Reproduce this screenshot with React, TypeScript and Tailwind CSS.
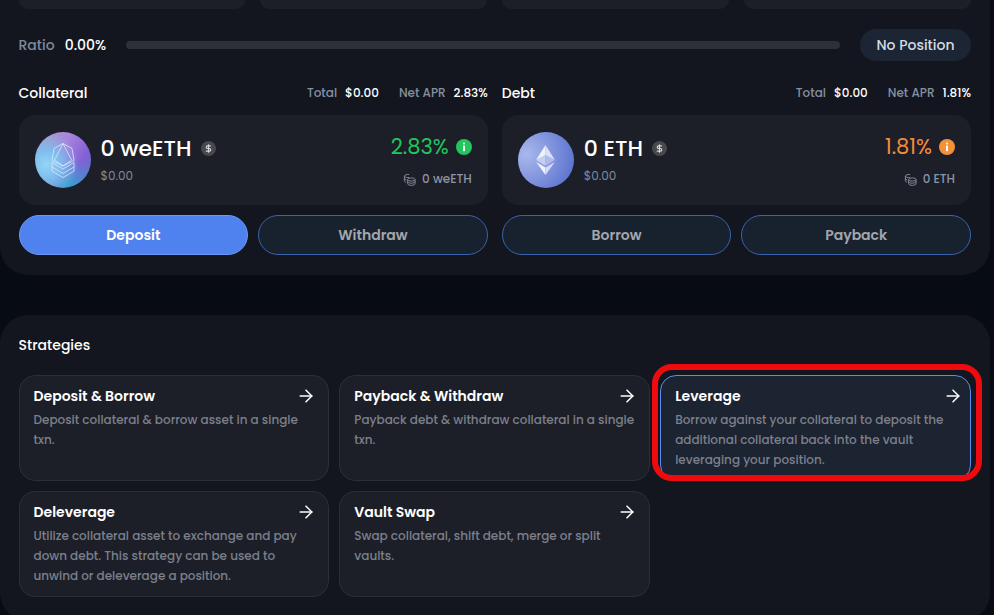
import type { ReactNode } from "react";
import { ArrowRight, DollarSign } from "lucide-react";

const font = "font-['Poppins','Inter','Noto_Sans',sans-serif]";

function CoinsIcon() {
  return (
    <svg viewBox="0 0 14 14" className="h-[13px] w-[13px] text-[#8b8f98]" fill="none" stroke="currentColor" strokeWidth="1">
      <path d="M6.5 1.6C3.8 1.4 1.5 2.2 1.5 3.4v5c0 .7.6 1.2 1.7 1.5" />
      <path d="M1.5 3.6c.6 1 2.8 1.5 5 1.3M1.5 6.2c.4.6 1.1 1 2 1.2" />
      <ellipse cx="9" cy="7" rx="4" ry="1.7" />
      <path d="M5 7v4.6c0 .9 1.8 1.7 4 1.7s4-.8 4-1.7V7M5 9.3c0 .9 1.8 1.7 4 1.7s4-.8 4-1.7" />
    </svg>
  );
}

function InfoBadge({ className }: { className: string }) {
  return (
    <svg viewBox="0 0 16 16" className={`h-4 w-4 ${className}`}>
      <circle cx="8" cy="8" r="8" fill="currentColor" />
      <rect x="7" y="3.6" width="2" height="2" rx="1" fill="#fff" />
      <rect x="7" y="6.6" width="2" height="5.6" rx="0.6" fill="#fff" />
    </svg>
  );
}

function WeethLogo() {
  return (
    <div className="flex h-14 w-14 shrink-0 items-center justify-center rounded-full bg-[radial-gradient(circle_at_20%_58%,#92d6f7_0%,#7fbcec_26%,transparent_58%),radial-gradient(circle_at_58%_100%,#2fa6cf_0%,transparent_48%),linear-gradient(120deg,#a8a8c0_0%,#a884dc_42%,#8560d6_72%,#4a7cc0_100%)]">
      <svg viewBox="0 0 24 35" className="h-[35px] w-6" fill="none" stroke="#dfe6fb" strokeWidth="0.8" strokeLinejoin="round">
        <path d="M12 .5 21 5.5 23 17.5 12 23 1 17.5 3 5.5Z" />
        <path d="M12 .5 3.5 17 12 23 20.5 17Z" />
        <path d="M1 19.5 12 26 23 19.5 23 28 12 34.5 1 28Z" />
        <path d="M1 24 12 30.5 23 24" />
      </svg>
    </div>
  );
}

function EthLogo() {
  return (
    <div className="flex h-14 w-14 shrink-0 items-center justify-center rounded-full bg-[radial-gradient(circle_at_15%_40%,#a9b8ec_0%,#8698e0_40%,#4f68c8_100%)]">
      <svg viewBox="0 0 20 32" className="h-[30px] w-[19px]">
        <path d="M10 0 0 16 10 11Z" fill="#f0f3fd" />
        <path d="M10 0 20 16 10 11Z" fill="#dbe2f8" />
        <path d="M10 11 0 16 10 22Z" fill="#c5cff2" />
        <path d="M10 11 20 16 10 22Z" fill="#aebbea" />
        <path d="M0 18 10 32V24Z" fill="#f0f3fd" />
        <path d="M20 18 10 32V24Z" fill="#d5dcf6" />
      </svg>
    </div>
  );
}

type PositionProps = {
  title: string;
  apr: string;
  amount: string;
  aprColor: string;
  logo: ReactNode;
  buttons: { label: string; primary?: boolean }[];
};

function PositionColumn({ title, apr, amount, aprColor, logo, buttons }: PositionProps) {
  return (
    <div>
      <div className="flex h-[30px] items-center justify-between">
        <span className="text-sm font-medium text-white">{title}</span>
        <div className="flex items-center gap-2 text-xs font-medium">
          <span className="text-[#8590a0]">Total</span>
          <span className="text-white">$0.00</span>
          <span className="ml-3 text-[#8590a0]">Net APR</span>
          <span className="text-white">{apr}</span>
        </div>
      </div>
      <div className="mt-[7px] flex h-[90px] items-center justify-between rounded-2xl bg-[#1c1f28] px-4">
        <div className="flex items-center gap-[10px]">
          {logo}
          <div className="pb-[3px]">
            <div className="flex items-center gap-[9px]">
              <span className="text-[22px] leading-[30px] font-medium text-white">0 {amount}</span>
              <span className="flex h-[15px] w-[15px] items-center justify-center rounded-full bg-[#48494e]">
                <DollarSign className="h-[9px] w-[9px] text-[#d8d8da]" strokeWidth={3} />
              </span>
            </div>
            <div className="mt-1 text-xs text-[#7f8a9b]">$0.00</div>
          </div>
        </div>
        <div className="flex flex-col items-end gap-3 pt-[2px]">
          <div className={`flex items-center gap-[7px] text-[21px] leading-6 ${aprColor === "green" ? "text-[#22c55e]" : "text-[#f58a3c]"}`}>
            {apr}
            <InfoBadge className={aprColor === "green" ? "text-[#22c55e]" : "text-[#f59238]"} />
          </div>
          <div className="flex items-center gap-[6px] text-xs font-medium text-[#8b95a5]">
            <CoinsIcon />0 {amount}
          </div>
        </div>
      </div>
      <div className="mt-[10px] grid grid-cols-2 gap-[10px]">
        {buttons.map((b) => (
          <button
            key={b.label}
            className={
              b.primary
                ? "h-10 rounded-[20px] border border-[#6b97f5] bg-[#4f82ee] text-sm font-semibold text-white"
                : "h-10 rounded-[20px] border border-[#3a62ad] bg-[#18222f] text-sm font-semibold text-[#a3a6ac]"
            }
          >
            {b.label}
          </button>
        ))}
      </div>
    </div>
  );
}

const strategies = [
  { title: "Deposit & Borrow", text: "Deposit collateral & borrow asset in a single txn." },
  { title: "Payback & Withdraw", text: "Payback debt & withdraw collateral in a single txn." },
  { title: "Leverage", text: "Borrow against your collateral to deposit the additional collateral back into the vault leveraging your position.", active: true },
  { title: "Deleverage", text: "Utilize collateral asset to exchange and pay down debt. This strategy can be used to unwind or deleverage a position." },
  { title: "Vault Swap", text: "Swap collateral, shift debt, merge or split vaults." },
];

export default function App() {
  return (
    <div className={`${font} h-[615px] w-[994px] overflow-hidden bg-[#070b14] pr-1`}>
      <section className="rounded-b-[28px] bg-[#13161e] pr-[19px] pb-5 pl-[18.5px]">
        <div className="grid grid-cols-4 gap-[15px]">
          {[0, 1, 2, 3].map((i) => (
            <div key={i} className="h-[9px] rounded-b-2xl bg-[#1c1f28]" />
          ))}
        </div>
        <div className="mt-5 flex h-8 items-center">
          <span className="text-sm font-medium text-[#7f8a9b]">Ratio</span>
          <span className="ml-[10px] text-sm font-medium text-white">0.00%</span>
          <div className="ml-5 h-2 flex-1 rounded-full bg-[#2d3039]" />
          <span className="ml-5 flex h-8 w-[111px] items-center justify-center rounded-full bg-[#1b2533] text-sm font-medium text-[#d5dae2]">
            No Position
          </span>
        </div>
        <div className="mt-[17px] grid grid-cols-2 gap-[14px]">
          <PositionColumn
            title="Collateral"
            apr="2.83%"
            amount="weETH"
            aprColor="green"
            logo={<WeethLogo />}
            buttons={[{ label: "Deposit", primary: true }, { label: "Withdraw" }]}
          />
          <PositionColumn
            title="Debt"
            apr="1.81%"
            amount="ETH"
            aprColor="orange"
            logo={<EthLogo />}
            buttons={[{ label: "Borrow" }, { label: "Payback" }]}
          />
        </div>
      </section>
      <section className="relative mt-10 h-[306px] rounded-[28px] bg-[#13161e] pt-[20px] pr-[19px] pl-[18.5px]">
        <h2 className="text-sm leading-5 font-medium text-white">Strategies</h2>
        <div className="mt-5 grid grid-cols-3 gap-[10px]">
          {strategies.map((s) => (
            <div
              key={s.title}
              className={
                s.active
                  ? "h-[106px] rounded-2xl border border-[#5b8def] bg-[#1c2331] pt-[10px] pr-[12px] pl-[14px]"
                  : "h-[106px] rounded-2xl border border-[#2b2e37] bg-[#1c1f28] pt-[10px] pr-[12px] pl-[14px]"
              }
            >
              <div className="flex items-center justify-between">
                <span className="text-sm leading-5 font-semibold text-white">{s.title}</span>
                <ArrowRight className={s.active ? "h-5 w-5 translate-x-[5px] text-white" : "h-5 w-5 text-white"} strokeWidth={1.8} />
              </div>
              <p className="mt-1 text-xs leading-5 font-medium text-[#7d808b]">{s.text}</p>
            </div>
          ))}
        </div>
        <div className="absolute top-[49px] left-[652px] h-[117px] w-[330px] rounded-[20px] border-[6px] border-[#ee0b0f]" />
      </section>
    </div>
  );
}
